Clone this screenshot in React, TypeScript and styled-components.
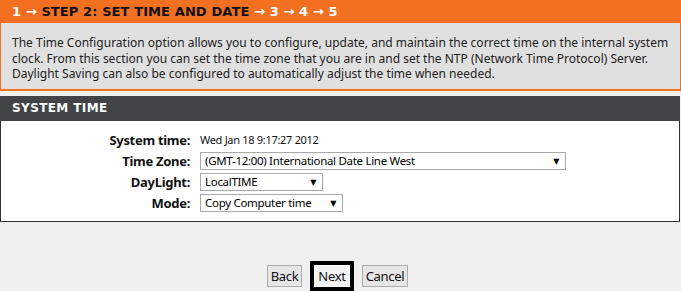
import styled, { createGlobalStyle } from 'styled-components';

const GlobalStyle = createGlobalStyle`
  html, body {
    margin: 0;
    padding: 0;
    background: #f0f0f0;
  }
  body {
    width: 681px;
    height: 291px;
    overflow: hidden;
    font-family: 'Noto Sans', 'DejaVu Sans', sans-serif;
  }
`;

const steps = ['1', 'STEP 2: SET TIME AND DATE', '3', '4', '5'];

const rows = [
  { label: 'System time:', text: 'Wed Jan 18 9:17:27 2012' },
  { label: 'Time Zone:', select: '(GMT-12:00) International Date Line West', width: 366 },
  { label: 'DayLight:', select: 'LocalTIME', width: 123 },
  { label: 'Mode:', select: 'Copy Computer time', width: 143 },
];

const App = () => {
  return (
    <>
      <GlobalStyle />
      <Page>
        <StepBar>
          {steps.map((step, i) => (
            <span key={step}>
              {i > 0 && <Arrow> → </Arrow>}
              <Step $current={i === 1}>{step}</Step>
            </span>
          ))}
        </StepBar>
        <Intro>
          The Time Configuration option allows you to configure, update, and maintain the correct time on the internal system
          <br />
          clock. From this section you can set the time zone that you are in and set the NTP (Network Time Protocol) Server.
          <br />
          Daylight Saving can also be configured to automatically adjust the time when needed.
        </Intro>

        <Section>
          <SectionTitle>SYSTEM TIME</SectionTitle>
          <SectionBody>
            {rows.map((row) => (
              <Row key={row.label}>
                <Label>{row.label}</Label>
                {row.select ? (
                  <SelectBox $width={row.width}>
                    <span>{row.select}</span>
                    <Caret>▼</Caret>
                  </SelectBox>
                ) : (
                  <Value>{row.text}</Value>
                )}
              </Row>
            ))}
          </SectionBody>
        </Section>

        <ButtonBar>
          <Button>Back</Button>
          <Focus>
            <Button>Next</Button>
          </Focus>
          <Button>Cancel</Button>
        </ButtonBar>
      </Page>
    </>
  );
};

export default App;

const Page = styled.div`
  width: 681px;
  display: flex;
  flex-direction: column;
`;

const StepBar = styled.div`
  height: 23px;
  background: #f37021;
  padding-left: 12px;
  display: flex;
  align-items: center;
  font: bold 13px 'DejaVu Sans', sans-serif;
  letter-spacing: 0.1px;
  color: #fff;
  white-space: pre;
`;

const Arrow = styled.span`
  color: #fff;
`;

const Step = styled.span<{ $current?: boolean }>`
  color: ${(p) => (p.$current ? '#111' : '#fff')};
`;

const Intro = styled.div`
  background: #e0e0e0;
  border: 1px solid #f37021;
  border-top: none;
  border-bottom-width: 2px;
  padding: 12px 11px 7px;
  font-size: 12px;
  line-height: 15.5px;
  color: #222;
  white-space: nowrap;
`;

const Section = styled.section`
  margin-top: 5px;
  width: 680px;
`;

const SectionTitle = styled.div`
  height: 25px;
  background: #404444;
  padding-left: 12px;
  display: flex;
  align-items: center;
  font: bold 12px 'DejaVu Sans', sans-serif;
  letter-spacing: 0.4px;
  color: #fff;
`;

const SectionBody = styled.div`
  background: #fff;
  border: 1px solid #333;
  border-top: none;
  padding: 10px 0 9px;
  display: flex;
  flex-direction: column;
  gap: 3px;
`;

const Row = styled.div`
  display: grid;
  grid-template-columns: 189px 1fr;
  column-gap: 10px;
  align-items: center;
  height: 18px;
`;

const Label = styled.div`
  text-align: right;
  font-size: 13px;
  font-weight: bold;
  letter-spacing: -0.3px;
  color: #111;
`;

const Value = styled.div`
  font-size: 11px;
  letter-spacing: -0.3px;
  color: #111;
`;

const SelectBox = styled.div<{ $width: number }>`
  width: ${(p) => p.$width}px;
  height: 18px;
  box-sizing: border-box;
  border: 1px solid #a9a9a9;
  background: #fff;
  padding: 0 6px 0 4px;
  display: flex;
  align-items: center;
  justify-content: space-between;
  font-size: 11.5px;
  letter-spacing: -0.3px;
  color: #000;
`;

const Caret = styled.span`
  font-size: 8px;
  color: #000;
`;

const ButtonBar = styled.div`
  margin-top: 39px;
  display: flex;
  justify-content: center;
  align-items: center;
  gap: 8px;
  padding-right: 6px;
`;

const Focus = styled.div`
  border: 4px solid #000;
  display: flex;
`;

const Button = styled.button`
  height: 22px;
  padding: 0 3px;
  border: 1px solid #adadad;
  border-radius: 0;
  background: #e6e6e6;
  font-family: 'Noto Sans', sans-serif;
  font-size: 13px;
  letter-spacing: -0.3px;
  color: #111;
  ${Focus} & {
    border-color: #fff;
    background: #f4f4f4;
  }
`;
